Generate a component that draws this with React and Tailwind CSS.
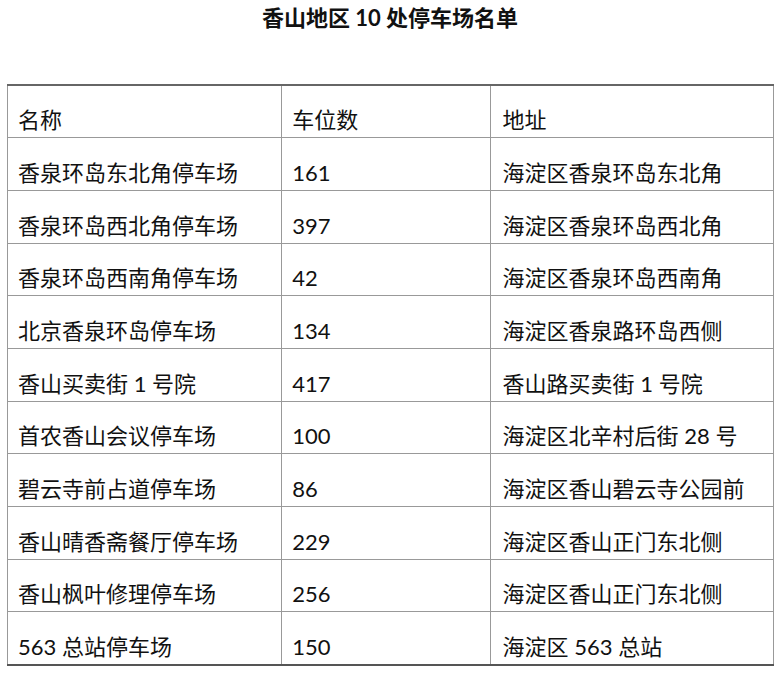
const rows = [
  ['香泉环岛东北角停车场', '161', '海淀区香泉环岛东北角'],
  ['香泉环岛西北角停车场', '397', '海淀区香泉环岛西北角'],
  ['香泉环岛西南角停车场', '42', '海淀区香泉环岛西南角'],
  ['北京香泉环岛停车场', '134', '海淀区香泉路环岛西侧'],
  ['香山买卖街 1 号院', '417', '香山路买卖街 1 号院'],
  ['首农香山会议停车场', '100', '海淀区北辛村后街 28 号'],
  ['碧云寺前占道停车场', '86', '海淀区香山碧云寺公园前'],
  ['香山晴香斋餐厅停车场', '229', '海淀区香山正门东北侧'],
  ['香山枫叶修理停车场', '256', '海淀区香山正门东北侧'],
  ['563 总站停车场', '150', '海淀区 563 总站'],
]

function Row({ cells, last }) {
  return (
    <tr className={last ? 'h-[52.7px] border-b-2 border-[#555]' : 'h-[52.7px] border-b-[1.5px] border-[#999]'}>
      <td className="w-[274px] border-x-[1.5px] border-[#999] pl-[10px] pb-[4px] align-bottom">{cells[0]}</td>
      <td className="w-[208px] border-x-[1.5px] border-[#999] pl-[10px] pb-[4px] align-bottom">{cells[1]}</td>
      <td className="w-[283px] border-x-[1.5px] border-[#999] pl-[12px] pb-[4px] align-bottom">{cells[2]}</td>
    </tr>
  )
}

export default function App() {
  return (
    <div
      className="w-[784px] h-[675px] bg-white text-[#111] pt-[4px]"
      style={{ fontFamily: 'Lato, "Noto Sans CJK SC", sans-serif' }}
    >
      <h1 className="text-center text-[22px] font-bold leading-[28px] pr-[4px]">香山地区 10 处停车场名单</h1>
      <table className="ml-[7px] mt-[52px] w-[767px] table-fixed border-collapse text-[22px] leading-[26px]">
        <tbody>
          <tr className="h-[52.7px] border-t-2 border-b-[1.5px] border-t-[#666] border-b-[#999]">
            <td className="w-[274px] border-x-[1.5px] border-[#999] pl-[10px] pb-[4px] align-bottom">名称</td>
            <td className="w-[208px] border-x-[1.5px] border-[#999] pl-[10px] pb-[4px] align-bottom">车位数</td>
            <td className="w-[283px] border-x-[1.5px] border-[#999] pl-[12px] pb-[4px] align-bottom">地址</td>
          </tr>
          {rows.map((r, i) => (
            <Row key={i} cells={r} last={i === rows.length - 1} />
          ))}
        </tbody>
      </table>
    </div>
  )
}
